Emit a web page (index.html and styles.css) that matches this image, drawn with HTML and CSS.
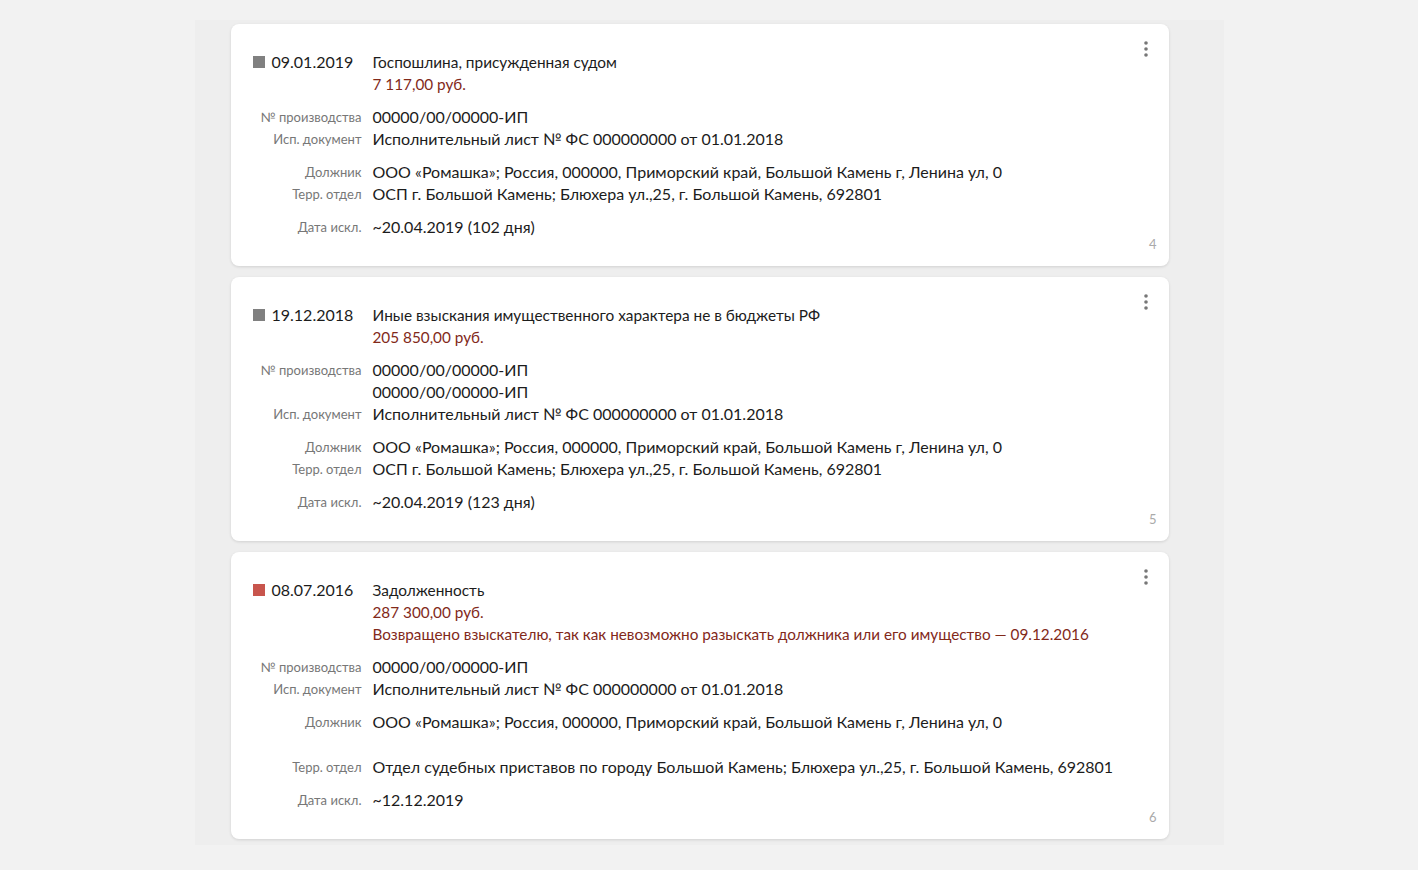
FILE: index.html
```html
<!DOCTYPE html>
<html lang="ru">
    <head>
        <meta charset="UTF-8">
        <title>Исполнительные производства</title>
        <link rel="stylesheet" href="styles.css">
    </head>
    <body>
        <div class="panel">

            <div class="card">
                <button class="menu" type="button">
                    <svg width="4" height="16" viewBox="0 0 4 16"><circle cx="2" cy="2" r="1.8"/><circle cx="2" cy="8" r="1.8"/><circle cx="2" cy="14" r="1.8"/></svg>
                </button>
                <div class="group">
                    <div class="when"><span class="mark"></span>09.01.2019</div>
                    <div>
                        <div class="title">Госпошлина, присужденная судом</div>
                        <div class="sum">7 117,00 руб.</div>
                    </div>
                </div>
                <div class="group">
                    <div class="label">№ производства</div>
                    <div class="value">00000/00/00000-ИП</div>
                    <div class="label">Исп. документ</div>
                    <div class="value">Исполнительный лист № ФС 000000000 от 01.01.2018</div>
                </div>
                <div class="group">
                    <div class="label">Должник</div>
                    <div class="value">ООО «Ромашка»; Россия, 000000, Приморский край, Большой Камень г, Ленина ул, 0</div>
                    <div class="label">Терр. отдел</div>
                    <div class="value">ОСП г. Большой Камень; Блюхера ул.,25, г. Большой Камень, 692801</div>
                </div>
                <div class="group">
                    <div class="label">Дата искл.</div>
                    <div class="value">~20.04.2019 (102 дня)</div>
                </div>
                <span class="num">4</span>
            </div>

            <div class="card">
                <button class="menu" type="button">
                    <svg width="4" height="16" viewBox="0 0 4 16"><circle cx="2" cy="2" r="1.8"/><circle cx="2" cy="8" r="1.8"/><circle cx="2" cy="14" r="1.8"/></svg>
                </button>
                <div class="group">
                    <div class="when"><span class="mark"></span>19.12.2018</div>
                    <div>
                        <div class="title">Иные взыскания имущественного характера не в бюджеты РФ</div>
                        <div class="sum">205 850,00 руб.</div>
                    </div>
                </div>
                <div class="group">
                    <div class="label">№ производства</div>
                    <div class="value">00000/00/00000-ИП<br>00000/00/00000-ИП</div>
                    <div class="label">Исп. документ</div>
                    <div class="value">Исполнительный лист № ФС 000000000 от 01.01.2018</div>
                </div>
                <div class="group">
                    <div class="label">Должник</div>
                    <div class="value">ООО «Ромашка»; Россия, 000000, Приморский край, Большой Камень г, Ленина ул, 0</div>
                    <div class="label">Терр. отдел</div>
                    <div class="value">ОСП г. Большой Камень; Блюхера ул.,25, г. Большой Камень, 692801</div>
                </div>
                <div class="group">
                    <div class="label">Дата искл.</div>
                    <div class="value">~20.04.2019 (123 дня)</div>
                </div>
                <span class="num">5</span>
            </div>

            <div class="card">
                <button class="menu" type="button">
                    <svg width="4" height="16" viewBox="0 0 4 16"><circle cx="2" cy="2" r="1.8"/><circle cx="2" cy="8" r="1.8"/><circle cx="2" cy="14" r="1.8"/></svg>
                </button>
                <div class="group">
                    <div class="when"><span class="mark red"></span>08.07.2016</div>
                    <div>
                        <div class="title">Задолженность</div>
                        <div class="sum">287 300,00 руб.</div>
                        <div class="sum">Возвращено взыскателю, так как невозможно разыскать должника или его имущество — 09.12.2016</div>
                    </div>
                </div>
                <div class="group">
                    <div class="label">№ производства</div>
                    <div class="value">00000/00/00000-ИП</div>
                    <div class="label">Исп. документ</div>
                    <div class="value">Исполнительный лист № ФС 000000000 от 01.01.2018</div>
                </div>
                <div class="group">
                    <div class="label">Должник</div>
                    <div class="value tall">ООО «Ромашка»; Россия, 000000, Приморский край, Большой Камень г, Ленина ул, 0</div>
                    <div class="label">Терр. отдел</div>
                    <div class="value">Отдел судебных приставов по городу Большой Камень; Блюхера ул.,25, г. Большой Камень, 692801</div>
                </div>
                <div class="group">
                    <div class="label">Дата искл.</div>
                    <div class="value">~12.12.2019</div>
                </div>
                <span class="num">6</span>
            </div>

        </div>
    </body>
</html>
```
FILE: styles.css
```css
body {
    margin: 0;
    background: #f2f2f2;
    font-family: Lato, "Noto Sans", sans-serif;
    color: #1c1c1c;
}
.panel {
    width: 1029px;
    margin: 20px auto 0;
    padding: 4px 55px 6px 36px;
    box-sizing: border-box;
    background: #eeeeee;
    display: flex;
    flex-direction: column;
    gap: 11px;
}
.card {
    position: relative;
    background: #fff;
    border-radius: 8px;
    box-shadow: 0 1px 3px rgba(0, 0, 0, .12);
    padding: 27px 22px 28px;
}
.menu {
    position: absolute;
    top: 17px;
    right: 21px;
    padding: 0;
    border: 0;
    background: none;
    fill: #777;
    cursor: pointer;
}
.menu svg {display: block;}
.num {
    position: absolute;
    right: 12px;
    bottom: 14px;
    font-size: 13px;
    line-height: 16px;
    color: #aaa;
}

.group {
    display: grid;
    grid-template-columns: 109px 1fr;
    column-gap: 11px;
    align-items: start;
    line-height: 22px;
}
.group + .group {margin-top: 11px;}

.when {
    display: flex;
    align-items: center;
    gap: 7px;
    font-size: 16px;
}
.mark {
    width: 12px;
    height: 12px;
    background: #808080;
}
.mark.red {background: #c8554d;}
.title {font-size: 15.4px;}
.sum {
    font-size: 15.3px;
    color: #82291a;
}
.label {
    padding-top: 1px;
    line-height: 21px;
    font-size: 13px;
    color: #777;
    text-align: right;
    white-space: nowrap;
}
.value {font-size: 16px;}
.value.tall {padding-bottom: 23px;}
```
